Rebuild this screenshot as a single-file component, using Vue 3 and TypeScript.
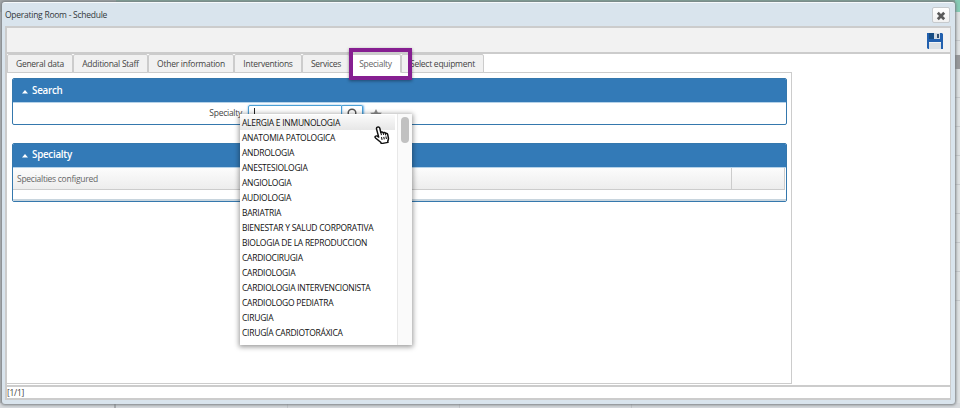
<template>
  <div class="desktop">
    <div class="page-top"><span></span></div>
    <div class="page-side">
      <span v-for="n in 10" :key="n"></span>
    </div>
    <div class="page-bottom"><span></span><span></span><span></span><span></span></div>

    <section class="window">
      <header class="title-bar">
        <span>Operating Room - Schedule</span>
        <button class="close" aria-label="Close">
          <svg width="10" height="10" viewBox="0 0 10 10">
            <path d="M1.8 1.8l6.4 6.4M8.2 1.8l-6.4 6.4" stroke="#5a5a5a" stroke-width="2.7" />
          </svg>
        </button>
      </header>

      <div class="frame">
        <div class="toolbar">
          <svg width="16" height="16" viewBox="0 0 16 16">
            <path d="M0 0h15l1 1v15H1l-1-1z" fill="#2260ae" />
            <path d="M2 0h5v6H2z" fill="#174d83" />
            <path d="M7 0h6v6H7z" fill="#d3dbe3" />
            <path d="M10 1h2v4h-2z" fill="#34506f" />
            <path d="M2 9h12v7H2z" fill="#dbe0e4" />
            <path d="M2 9h12v1H2z" fill="#f2f4f5" />
          </svg>
        </div>

        <main class="content">
          <nav class="tabs">
            <button
              v-for="tab in tabs"
              :key="tab.label"
              class="tab"
              :class="{ active: tab.label === activeTab }"
              :style="{ width: `${tab.width}px` }"
              @click="activeTab = tab.label"
            >{{ tab.label }}</button>
          </nav>

          <div class="tab-panel">
            <div class="panel search">
              <h2>
                <svg class="caret" width="6" height="4" viewBox="0 0 6 4"><path d="M3 0l3 3.5H0z" fill="#fff" /></svg>
                Search
              </h2>
              <div class="field">
                <label>Specialty</label>
                <div class="input"><i></i></div>
                <div class="lookup">
                  <svg width="12" height="12" viewBox="0 0 12 12">
                    <circle cx="6" cy="5" r="3.8" fill="none" stroke="#555" stroke-width="1.5" />
                  </svg>
                </div>
                <svg class="star" width="12" height="12" viewBox="0 0 12 12">
                  <path d="M6 0l1.8 3.4 4.2.3-3.2 2.9 1 4.3L6 8.7l-3.8 2.2 1-4.3L0 3.7l4.2-.3z" fill="#8b8b8b" />
                </svg>
              </div>
            </div>

            <div class="panel list">
              <h2>
                <svg class="caret" width="6" height="4" viewBox="0 0 6 4"><path d="M3 0l3 3.5H0z" fill="#fff" /></svg>
                Specialty
              </h2>
              <div class="grid-head">
                <span>Specialties configured</span>
                <span></span>
              </div>
              <div class="grid-row"></div>
            </div>
          </div>
        </main>

        <footer class="status">[1/1]</footer>
      </div>
    </section>

    <!-- autocomplete list -->
    <div class="popup">
      <ul>
        <li v-for="(item, i) in specialties" :key="item" :class="{ hover: i === 0 }">{{ item }}</li>
      </ul>
      <div class="scroll"><i></i></div>
    </div>

    <div class="marker"></div>

    <svg class="cursor" width="16" height="18" viewBox="0 0 15 18" preserveAspectRatio="none">
      <path
        d="M3.2 1.2c1-.6 2 .1 2.2 1l1 4.3c.6-.8 1.9-.5 2.2.3.7-.7 1.9-.3 2.1.6.8-.5 1.9 0 2.1 1l.7 3.5c.2 1.3-.2 2.3-.6 3.2l.2 1.3-6.3 1.2-.5-1.3-4.9-4.4c-1.1-1.2.4-2.6 1.8-1.7l1.2.9-2-8c-.2-.8.1-1.5.8-1.9z"
        fill="#fff"
        stroke="#111"
        stroke-width="1.4"
        stroke-linejoin="round"
      />
      <path d="M6.4 6.5l.6 2.7M8.6 6.9l.5 2M10.7 7.6l.4 1.7M7 11.2l.6 2.6M9.1 10.8l.6 2.6M11.1 10.4l.6 2.6" stroke="#111" fill="none" />
    </svg>
  </div>
</template>

<script setup lang="ts">
import { ref } from 'vue'

interface Tab {
  label: string
  width: number
}

const activeTab = ref('Specialty')

const tabs: Tab[] = [
  { label: 'General data', width: 66 },
  { label: 'Additional Staff', width: 75 },
  { label: 'Other information', width: 86 },
  { label: 'Interventions', width: 68 },
  { label: 'Services', width: 48 },
  { label: 'Specialty', width: 51 },
  { label: 'Select equipment', width: 83 }
]

const specialties: string[] = [
  'ALERGIA E INMUNOLOGIA',
  'ANATOMIA PATOLOGICA',
  'ANDROLOGIA',
  'ANESTESIOLOGIA',
  'ANGIOLOGIA',
  'AUDIOLOGIA',
  'BARIATRIA',
  'BIENESTAR Y SALUD CORPORATIVA',
  'BIOLOGIA DE LA REPRODUCCION',
  'CARDIOCIRUGIA',
  'CARDIOLOGIA',
  'CARDIOLOGIA INTERVENCIONISTA',
  'CARDIOLOGO PEDIATRA',
  'CIRUGIA',
  'CIRUGÍA CARDIOTORÁXICA'
]
</script>

<style>
body {
  margin: 0;
  overflow: hidden;
}
</style>

<style scoped>
* {
  box-sizing: border-box;
}

.desktop {
  position: relative;
  width: 960px;
  height: 408px;
  overflow: hidden;
  background: #b9bcbe;
  font-family: "Open Sans", "Noto Sans", sans-serif;
  font-size: 8.5px;
  letter-spacing: -0.26px;
  color: #444;
}

/* dimmed page behind the window */
.page-top {
  position: absolute;
  inset: 0 0 auto 0;
  height: 12px;
  background: linear-gradient(90deg, #a5a9ab 116px, #83a79b 116px);
}

.page-top span {
  display: block;
  width: 5px;
  height: 12px;
  margin-left: auto;
  background: #85cdb5;
}

.page-side {
  position: absolute;
  top: 12px;
  right: 0;
  width: 5px;
  height: 396px;
  background: #dfe2e3;
}

.page-side span {
  display: block;
  height: 29px;
  border-bottom: 1px solid #c7cacc;
}

.page-side span:nth-child(2) {
  height: 28px;
  border-bottom: 14px solid #98999b;
}

.page-bottom {
  position: absolute;
  left: 0;
  right: 0;
  bottom: 0;
  display: flex;
  height: 5px;
  background: #d7dadd;
}

.page-bottom span {
  width: 116px;
  border-right: 2px solid #aaadb0;
}

.page-bottom span + span {
  width: 172px;
  border-right: 1px solid #c4c7ca;
}

/* window */
.window {
  position: absolute;
  left: 2px;
  top: 2px;
  width: 953px;
  height: 402px;
  padding: 0 4px 4px 3px;
  display: flex;
  flex-direction: column;
  background: #d9e4ed;
  border-top: 1px solid #f6f9fb;
  border-radius: 3px;
  box-shadow: 0 0 3px 1px #777c80;
}

.title-bar {
  display: flex;
  justify-content: space-between;
  height: 23px;
  line-height: 24px;
  color: #33383c;
}

.close {
  display: flex;
  align-items: center;
  justify-content: center;
  width: 18px;
  height: 16px;
  margin: 4px 1px 0 0;
  padding: 1px 0 0;
  border: 1px solid #c6cacd;
  border-radius: 2px;
  background: linear-gradient(#fff, #f1f1f1);
}

.frame {
  flex: 1;
  display: flex;
  flex-direction: column;
  min-height: 0;
  border: 2px solid #ccc;
  border-right-width: 1px;
}

.toolbar {
  display: flex;
  justify-content: flex-end;
  height: 26px;
  padding: 5px 7px 0 0;
  background: #f2f2f2;
  border-bottom: 2px solid #ccc;
}

.content {
  flex: 1;
  background: #fff;
  border-bottom: 2px solid #ccc;
}

.tabs {
  display: flex;
  height: 19px;
}

.tab {
  flex: none;
  padding: 0;
  border: 1px solid #ccc;
  border-radius: 2px 2px 0 0;
  background: #f1f1f1;
  font: inherit;
  letter-spacing: inherit;
  line-height: 17px;
  color: #444;
  white-space: nowrap;
}

.tab.active {
  background: #fff;
  border-bottom-color: #fff;
  color: #666;
}

.tab-panel {
  width: 785px;
  height: 312px;
  margin-top: -1px;
  padding: 5px 4px 0 5px;
  border: 1px solid #ccc;
  border-left: 0;
}

.panel {
  display: flex;
  flex-direction: column;
  border: 1px solid #3578ad;
  border-radius: 2px;
  overflow: hidden;
  background: #fff;
}

.panel.search {
  height: 47px;
}

.panel.list {
  height: 59px;
  margin-top: 18px;
}

.panel h2 {
  display: flex;
  align-items: center;
  flex: none;
  height: 24px;
  margin: 0;
  padding-left: 9px;
  border-bottom: 1px solid #b5d2e9;
  background: #337ab7;
  color: #fff;
  font-size: 9.8px;
  font-weight: 600;
}

.panel.list h2 {
  padding-bottom: 2px;
}

.caret {
  margin: 2px 4px 0 0;
}

.field {
  display: flex;
  height: 20px;
  padding-top: 2px;
}

.field label {
  width: 229px;
  padding-top: 2px;
  text-align: right;
}

.input {
  width: 94px;
  height: 16px;
  margin-left: 6px;
  border: 1px solid #4a9fd5;
  border-radius: 2px 0 0 2px;
  box-shadow: 0 0 2px #66afe9;
}

.input i {
  display: block;
  width: 1px;
  height: 9px;
  margin: 2px 0 0 5px;
  background: #222;
}

.lookup {
  width: 21px;
  height: 16px;
  padding: 2px 0 0 4px;
  border: 1px solid #4a9fd5;
  border-left: 0;
  border-radius: 0 2px 2px 0;
  box-shadow: 1px 0 2px #66afe9;
}

.star {
  margin: 4px 0 0 7px;
}

.grid-head {
  display: flex;
  flex: none;
  height: 22px;
  margin-right: 1px;
  border-right: 1px solid #ccc;
  border-bottom: 1px solid #ccc;
  background: linear-gradient(#fcfcfc, #ededed);
  line-height: 22px;
  color: #666;
}

.grid-head span:first-child {
  width: 719px;
  padding-left: 4px;
  border-right: 1px solid #ccc;
}

.grid-row {
  flex: 1;
  border-bottom: 2px solid #c8d5de;
}

.status {
  height: 11px;
  background: #fff;
  line-height: 11px;
}

/* dropdown */
.popup {
  position: absolute;
  left: 240px;
  top: 114px;
  width: 172px;
  height: 231px;
  display: flex;
  background: #fff;
  box-shadow: 0 1px 5px 1px rgba(0, 0, 0, 0.4);
}

.popup ul {
  flex: 1;
  margin: 0;
  padding: 1px 2px 0 0;
  list-style: none;
}

.popup li {
  height: 15px;
  padding-left: 2px;
  line-height: 16px;
  color: #111;
  white-space: nowrap;
}

.popup li.hover {
  background: linear-gradient(#fafafa, #e7e7e7);
}

.scroll {
  width: 15px;
  padding: 3px 3px 0;
  border-left: 1px solid #e8e8e8;
  background: #fafafa;
}

.scroll i {
  display: block;
  width: 8px;
  height: 26px;
  border-radius: 4px;
  background: #c1c1c1;
}

.marker {
  position: absolute;
  left: 349px;
  top: 48px;
  width: 63px;
  height: 32px;
  border: 4px solid #861f91;
  box-shadow: 0 1px 3px rgba(0, 0, 0, 0.4);
}

.cursor {
  position: absolute;
  left: 374px;
  top: 126px;
}
</style>
